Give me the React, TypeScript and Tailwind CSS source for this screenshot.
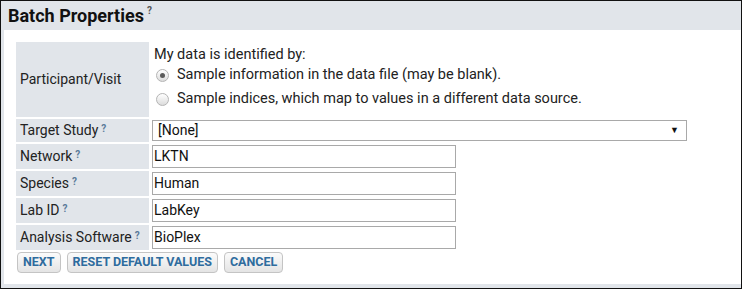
import React from "react";

const Help = () => (
  <sup className="ml-[3px] text-[10px] font-bold text-[#5a7a99] relative -top-[2px]">?</sup>
);

function Radio({ checked }: { checked?: boolean }) {
  return (
    <span className="w-[13px] h-[13px] rounded-full border border-[#b4b4b4] bg-gradient-to-b from-white to-[#dcdcdc] flex items-center justify-center shrink-0">
      {checked && <span className="w-[5px] h-[5px] rounded-full bg-[#5a5a5a]" />}
    </span>
  );
}

function Label({ text, help = true, className = "" }: { text: string; help?: boolean; className?: string }) {
  return (
    <div className={`bg-[#e1e5ea] pl-[4px] flex items-center text-[#222] ${className}`}>
      <span>{text}</span>
      {help && <Help />}
    </div>
  );
}

function TextField({ value }: { value: string }) {
  return (
    <div className="flex items-center h-full">
      <div className="w-[304px] h-[23px] border border-[#a9a9a9] pl-[1px] flex items-center text-[#111]">{value}</div>
    </div>
  );
}

function Button({ children }: { children: React.ReactNode }) {
  return (
    <button className="h-[21px] px-[5px] rounded-[4px] border border-[#c4c4c4] bg-gradient-to-b from-[#fbfbfb] to-[#e4e4e4] text-[12.5px] font-bold text-[#2e6c9e] leading-none">
      {children}
    </button>
  );
}

export default function App() {
  const fields = [
    { label: "Network", value: "LKTN" },
    { label: "Species", value: "Human" },
    { label: "Lab ID", value: "LabKey" },
    { label: "Analysis Software", value: "BioPlex" },
  ];

  return (
    <div className="w-[742px] h-[289px] border border-[#111] bg-[#e1e5ea] flex flex-col font-['Roboto',sans-serif] text-[14px]">
      <div className="h-[29px] shrink-0 pl-[7px] flex items-center">
        <span className="text-[18px] font-bold text-[#111]">Batch Properties</span>
        <sup className="ml-[3px] text-[10px] font-bold text-[#555] -top-[5px] relative">?</sup>
      </div>
      <div className="flex-1 ml-[3px] mb-[4px] bg-white pl-[12px] pt-[12px]">
        <div className="grid grid-cols-[133px_1fr] gap-x-[3px] gap-y-[2px]">
          <Label text="Participant/Visit" help={false} className="h-[75px]" />
          <div className="pl-[2px] pt-[4px] flex flex-col text-[#222] text-[14.5px]">
            <div className="h-[17px] flex items-center">My data is identified by:</div>
            <div className="h-[24px] flex items-center gap-[8px] pl-[2px]">
              <Radio checked />
              <span>Sample information in the data file (may be blank).</span>
            </div>
            <div className="h-[24px] flex items-center gap-[8px] pl-[2px]">
              <Radio />
              <span>Sample indices, which map to values in a different data source.</span>
            </div>
          </div>

          <Label text="Target Study" className="h-[23px]" />
          <div className="flex items-center">
            <div className="w-[535px] h-[21px] border border-[#a9a9a9] pl-[5px] pr-[7px] flex items-center justify-between text-[#111]">
              <span>[None]</span>
              <span className="text-[9px]">▼</span>
            </div>
          </div>

          {fields.map((f) => (
            <React.Fragment key={f.label}>
              <Label text={f.label} className="h-[25px]" />
              <TextField value={f.value} />
            </React.Fragment>
          ))}
        </div>
        <div className="flex gap-[6px] mt-[2px] pl-[1px]">
          <Button>NEXT</Button>
          <Button>RESET DEFAULT VALUES</Button>
          <Button>CANCEL</Button>
        </div>
      </div>
    </div>
  );
}
